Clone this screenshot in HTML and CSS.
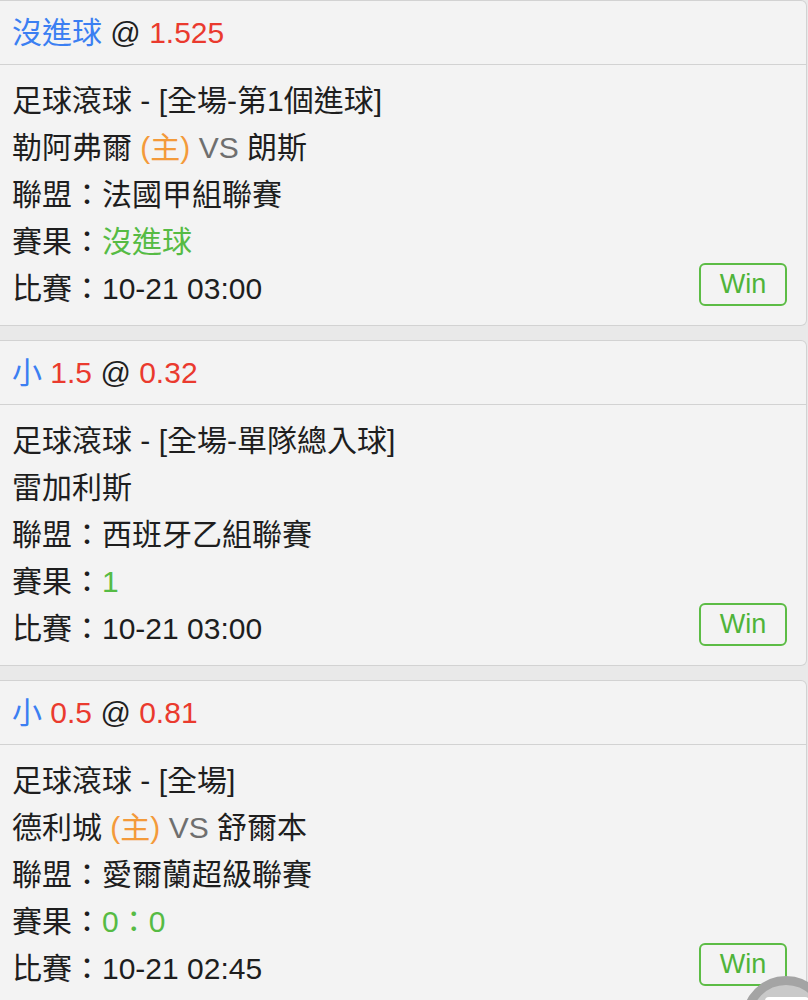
FILE: index.html
```html
<!DOCTYPE html>
<html lang="zh-Hant">
<head>
<meta charset="utf-8">
<link rel="stylesheet" href="styles.css">
</head>
<body>
<div class="list">
  <div class="card">
    <div class="card-head"><span class="blue">沒進球</span> @ <span class="red">1.525</span></div>
    <div class="card-body">
      <div class="line">足球滾球 - [全場-第1個進球]</div>
      <div class="line">勒阿弗爾 <span class="orange">(主)</span> <span class="gray">VS</span> 朗斯</div>
      <div class="line">聯盟：法國甲組聯賽</div>
      <div class="line">賽果：<span class="green">沒進球</span></div>
      <div class="line last"><span>比賽：10-21 03:00</span><span class="win">Win</span></div>
    </div>
  </div>
  <div class="card">
    <div class="card-head"><span class="blue">小</span> <span class="red">1.5</span> @ <span class="red">0.32</span></div>
    <div class="card-body">
      <div class="line">足球滾球 - [全場-單隊總入球]</div>
      <div class="line">雷加利斯</div>
      <div class="line">聯盟：西班牙乙組聯賽</div>
      <div class="line">賽果：<span class="green">1</span></div>
      <div class="line last"><span>比賽：10-21 03:00</span><span class="win">Win</span></div>
    </div>
  </div>
  <div class="card">
    <div class="card-head"><span class="blue">小</span> <span class="red">0.5</span> @ <span class="red">0.81</span></div>
    <div class="card-body">
      <div class="line">足球滾球 - [全場]</div>
      <div class="line">德利城 <span class="orange">(主)</span> <span class="gray">VS</span> 舒爾本</div>
      <div class="line">聯盟：愛爾蘭超級聯賽</div>
      <div class="line">賽果：<span class="green">0：0</span></div>
      <div class="line last"><span>比賽：10-21 02:45</span><span class="win">Win</span></div>
    </div>
  </div>
</div>
<div class="fab"><div class="fab-inner"></div></div>
</body>
</html>
```

FILE: styles.css
```css
html, body {
  margin: 0;
  padding: 0;
  background: #e9e9e9;
  overflow: hidden;
}
body {
  font-family: "Liberation Sans", "Noto Sans CJK TC", sans-serif;
  font-size: 30px;
  color: #1e1e1e;
  height: 1000px;
}
.list {
  display: flex;
  flex-direction: column;
  gap: 14px;
}
.card {
  background: #f3f3f3;
  border: 1px solid #d2d2d2;
  border-left: none;
  border-radius: 0 6px 6px 0;
  margin-right: 1px;
}
.card-head {
  height: 63px;
  line-height: 63px;
  padding-left: 12px;
  border-bottom: 1px solid #d2d2d2;
  box-sizing: content-box;
}
.card-body {
  padding: 12px 19px 13px 12px;
}
.line {
  height: 47px;
  line-height: 47px;
  white-space: nowrap;
}
.line.last {
  display: flex;
  justify-content: space-between;
  align-items: flex-end;
}
.win {
  width: 84px;
  height: 39px;
  line-height: 38px;
  border: 2px solid #5cbc45;
  border-radius: 6px;
  color: #4fb43a;
  font-size: 27px;
  text-align: center;
  margin-bottom: 6px;
}
.blue { color: #3b7ff2; }
.red { color: #ea3a2e; }
.orange { color: #f39a3a; }
.gray { color: #6f6f6f; }
.green { color: #56bb44; }
.fab {
  position: fixed;
  left: 742px;
  top: 976px;
  width: 70px;
  height: 70px;
  border-radius: 50%;
  border: 9px solid #a4a4a4;
  background: #c9c9c9;
}
.fab-inner {
  position: absolute;
  left: 14px;
  top: 12px;
  width: 44px;
  height: 40px;
  background: #ffffff;
  border-radius: 4px;
}
```
